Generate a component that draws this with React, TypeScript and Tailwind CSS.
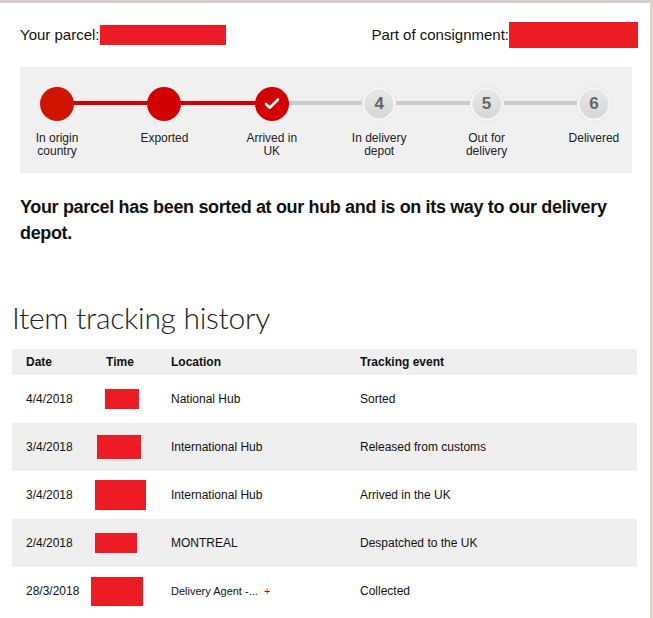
import { Check } from "lucide-react"

const steps = [
  { label: "In origin country", done: true, first: true },
  { label: "Exported", done: true },
  { label: "Arrived in UK", done: true, current: true },
  { label: "In delivery depot", n: 4 },
  { label: "Out for delivery", n: 5 },
  { label: "Delivered", n: 6 },
]

const rows = [
  { date: "4/4/2018", box: "w-[34px] h-[20px] ml-[21px]", loc: "National Hub", event: "Sorted" },
  { date: "3/4/2018", box: "w-[44px] h-[24px] ml-[13px]", loc: "International Hub", event: "Released from customs" },
  { date: "3/4/2018", box: "w-[51px] h-[30px] ml-[11px]", loc: "International Hub", event: "Arrived in the UK" },
  { date: "2/4/2018", box: "w-[42px] h-[20px] ml-[11px]", loc: "MONTREAL", event: "Despatched to the UK" },
  { date: "28/3/2018", box: "w-[52px] h-[29px] ml-[7px]", loc: "Delivery Agent -...", more: true, event: "Collected" },
]

export default function App() {
  return (
    <div className="w-[653px] h-[618px] overflow-hidden bg-white border-t-[3px] border-t-[#d4cec6] border-r-[3px] border-r-[#e0d5c5] font-['Liberation_Sans',Arial,sans-serif] text-[#111]">
      {/* parcel / consignment */}
      <div className="flex items-center justify-between pl-[20px] pr-[12px] pt-[19px] h-[45px]">
        <div className="flex items-center text-[15px]">
          <span>Your parcel:</span>
          <span className="w-[126px] h-[20px] bg-[#ed1c24]" />
        </div>
        <div className="flex items-center text-[15px]">
          <span>Part of consignment:</span>
          <span className="w-[129px] h-[26px] bg-[#ed1c24]" />
        </div>
      </div>

      {/* progress tracker */}
      <div className="relative mt-[19px] ml-[20px] mr-[18px] h-[106px] bg-[#f0f0f0] pt-[20px] pl-[2px] pr-[3px]">
        <div className="absolute left-[37px] w-[215px] top-[34px] h-[4px] bg-[#d20000]" />
        <div className="absolute left-[252px] w-[322px] top-[34px] h-[4px] bg-[#cccccc]" />
        <div className="relative flex justify-between">
          {steps.map((s) => (
            <div key={s.label} className="w-[70px] flex flex-col items-center">
              {s.done ? (
                <div className={`w-[34px] h-[34px] rounded-full flex items-center justify-center ${s.first ? "bg-[#cf1500]" : "bg-[#d20000]"}`}>
                  {s.current && <Check className="w-[18px] h-[18px] text-white" strokeWidth={3.5} />}
                </div>
              ) : (
                <div className="w-[34px] h-[34px] rounded-full bg-[#e9e9e9] border-[2px] border-[#f6f6f6] shadow-[0_0_1px_#bbb] flex items-center justify-center">
                  <div className="w-[28px] h-[28px] rounded-full bg-gradient-to-b from-[#e8e8e8] to-[#d6d6d6] flex items-center justify-center text-[17px] font-bold text-[#666]">
                    {s.n}
                  </div>
                </div>
              )}
              <div className="mt-[11px] text-[12px] leading-[13px] text-center text-[#222]">{s.label}</div>
            </div>
          ))}
        </div>
      </div>

      {/* status message */}
      <h2 className="mt-[21px] ml-[20px] mr-[14px] text-[18px] leading-[26px] font-bold tracking-[-0.35px]">
        Your parcel has been sorted at our hub and is on its way to our delivery depot.
      </h2>

      {/* history */}
      <h3 className="mt-[53px] ml-[12px] text-[30px] leading-[36px] font-light tracking-[-0.3px] text-[#222] font-['Lato','Open_Sans',sans-serif]">
        Item tracking history
      </h3>

      <div className="mt-[14px] ml-[12px] mr-[13px] text-[12px] text-[#111]">
        <div className="grid grid-cols-[72px_72px_189px_1fr] items-center h-[26px] bg-[#efefef] font-bold">
          <div className="pl-[14px]">Date</div>
          <div className="text-center">Time</div>
          <div className="pl-[15px]">Location</div>
          <div className="pl-[15px]">Tracking event</div>
        </div>
        {rows.map((r, i) => (
          <div
            key={i}
            className={`grid grid-cols-[72px_72px_189px_1fr] items-center h-[48px] ${i % 2 === 1 ? "bg-[#efefef]" : "bg-white"}`}
          >
            <div className="pl-[14px]">{r.date}</div>
            <div className="flex">
              <span className={`bg-[#ed1c24] ${r.box}`} />
            </div>
            <div className="pl-[15px]">
              {r.more ? (
                <span className="text-[11px]">
                  {r.loc} <span className="ml-[3px] text-[#d40000]">+</span>
                </span>
              ) : (
                r.loc
              )}
            </div>
            <div className="pl-[15px]">{r.event}</div>
          </div>
        ))}
      </div>
    </div>
  )
}
